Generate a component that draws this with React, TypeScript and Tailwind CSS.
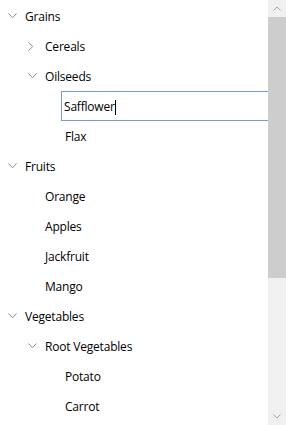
import React from 'react';

type Node = { label: string; level: number; chevron?: 'down' | 'right'; editing?: boolean };

const rows: Node[] = [
  { label: 'Grains', level: 0, chevron: 'down' },
  { label: 'Cereals', level: 1, chevron: 'right' },
  { label: 'Oilseeds', level: 1, chevron: 'down' },
  { label: 'Safflower', level: 2, editing: true },
  { label: 'Flax', level: 2 },
  { label: 'Fruits', level: 0, chevron: 'down' },
  { label: 'Orange', level: 1 },
  { label: 'Apples', level: 1 },
  { label: 'Jackfruit', level: 1 },
  { label: 'Mango', level: 1 },
  { label: 'Vegetables', level: 0, chevron: 'down' },
  { label: 'Root Vegetables', level: 1, chevron: 'down' },
  { label: 'Potato', level: 2 },
  { label: 'Carrot', level: 2 },
];

const indent = ['pl-0', 'pl-[20px]', 'pl-[40px]'];

const Chevron = ({ dir }: { dir: 'down' | 'right' }) =>
  dir === 'down' ? (
    <svg width="9" height="6" viewBox="0 0 9 6" className="ml-[8px]">
      <path d="M0.5 0.5 L4.5 4.8 L8.5 0.5" fill="none" stroke="#8a8a8a" strokeWidth="1" />
    </svg>
  ) : (
    <svg width="6" height="9" viewBox="0 0 6 9" className="ml-[8px]">
      <path d="M0.5 0.5 L4.8 4.5 L0.5 8.5" fill="none" stroke="#8a8a8a" strokeWidth="1" />
    </svg>
  );

export default function App() {
  return (
    <div className="flex w-[286px] h-[425px] bg-white overflow-hidden text-[12px] tracking-[-0.2px] text-black [font-family:'Segoe_UI','Open_Sans',sans-serif]">
      <div className="flex-1 flex flex-col pt-[1px] min-w-0">
        {rows.map((r) => (
          <div key={r.label} className={`h-[30px] shrink-0 flex items-center ${indent[r.level]}`}>
            <div className="w-[25px] shrink-0 flex items-center">
              {r.chevron && <Chevron dir={r.chevron} />}
            </div>
            {r.editing ? (
              <div className="-ml-[4px] mr-[-2px] flex-1 h-[30px] border border-[#7a9ad0] flex items-center pl-[2px] bg-white">
                <span className="pt-[2px]">{r.label}</span>
                <span className="w-[1px] h-[15px] mt-[2px] bg-black" />
              </div>
            ) : (
              <span className="whitespace-nowrap pt-[2px]">{r.label}</span>
            )}
          </div>
        ))}
      </div>
      <div className="w-[18px] shrink-0 flex flex-col bg-[#f0f0f0] relative z-10">
        <div className="h-[17px] flex items-center justify-center">
          <svg width="8" height="5" viewBox="0 0 8 5">
            <path d="M0.5 4.5 L4 1 L7.5 4.5" fill="none" stroke="#a3a3a3" strokeWidth="1" />
          </svg>
        </div>
        <div className="h-[261px] bg-[#cdcdcd]" />
        <div className="flex-1" />
        <div className="h-[17px] flex items-center justify-center">
          <svg width="8" height="5" viewBox="0 0 8 5">
            <path d="M0.5 0.5 L4 4 L7.5 0.5" fill="none" stroke="#a3a3a3" strokeWidth="1" />
          </svg>
        </div>
      </div>
    </div>
  );
}
